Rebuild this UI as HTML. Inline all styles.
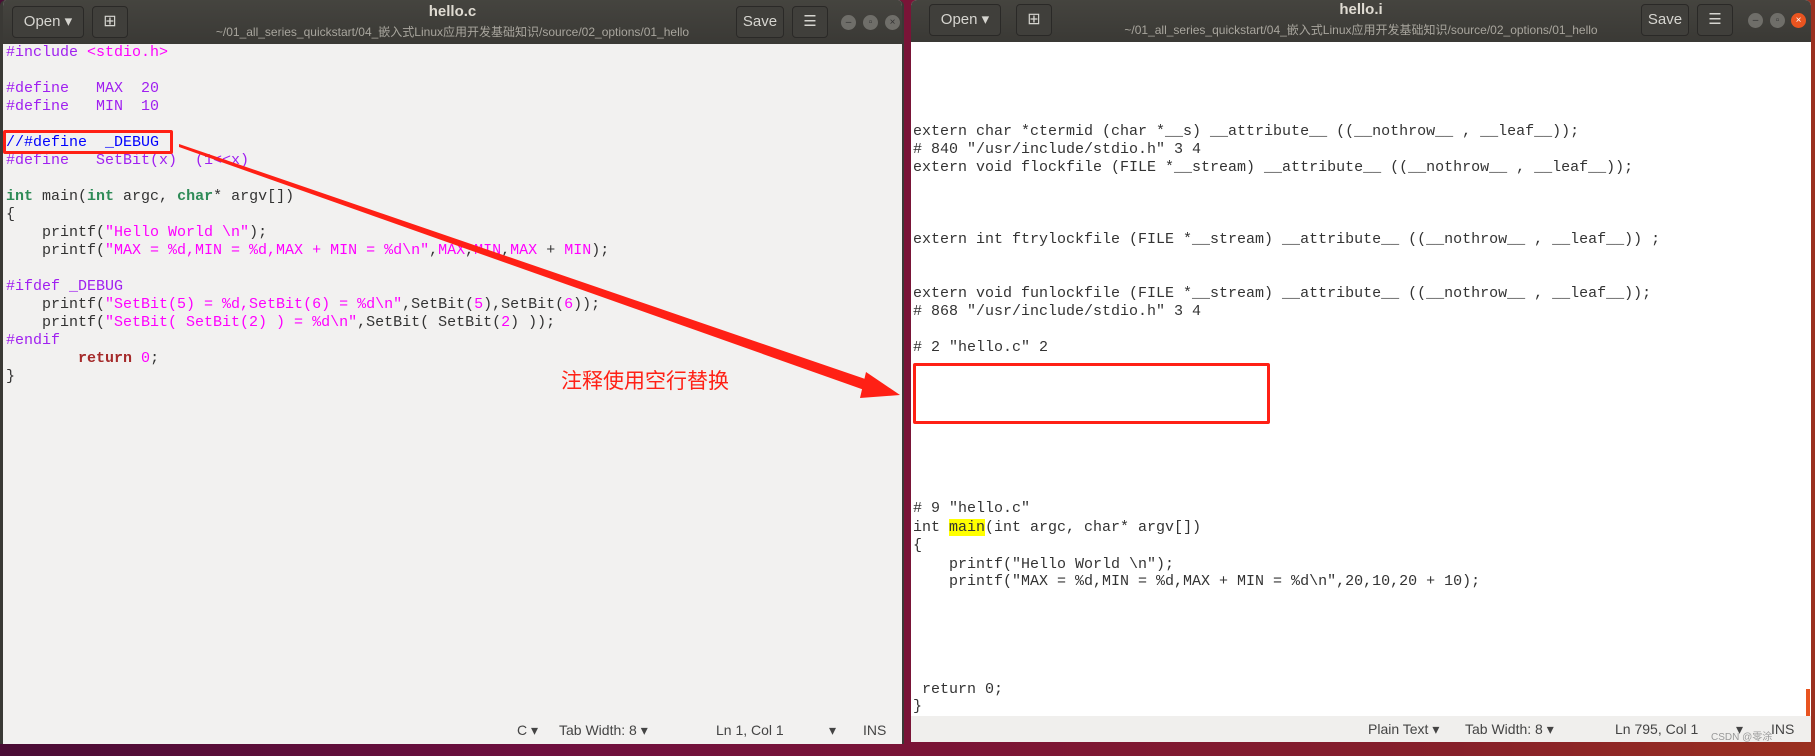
<!DOCTYPE html>
<html><head><meta charset="utf-8"><style>
*{margin:0;padding:0;box-sizing:border-box}
body{width:1815px;height:756px;overflow:hidden;position:relative;background:linear-gradient(90deg,#4a0c35 0%,#6e0f3e 30%,#7c1535 55%,#86202a 80%,#9a3020 100%);font-family:"Liberation Sans","Noto Sans CJK SC",sans-serif}
.win{position:absolute;top:0;overflow:hidden;border-radius:6px 6px 0 0}
.tb{position:absolute;left:0;right:0;top:0;height:44px;background:linear-gradient(#45443f,#3a3935);}
.btn{position:absolute;top:6px;height:32px;border:1px solid #2a2927;border-radius:4px;background:#403f3b;color:#d6d5d0;font-size:15px;line-height:30px;text-align:center}
.t1{position:absolute;top:3px;left:0;right:0;text-align:center;color:#dfdbd2;font-size:15px;font-weight:bold}
.t2{position:absolute;top:23px;left:0;right:0;text-align:center;color:#a8a59d;font-size:12px;font-family:"Liberation Sans","Noto Sans CJK SC",sans-serif}
.ctl{position:absolute;top:15px;width:15px;height:15px;border-radius:50%;background:#6f6e69;color:#333;font-size:10px;line-height:15px;text-align:center}
.code{position:absolute;left:0;right:0;top:44px;bottom:0;font-family:"Liberation Mono",monospace;font-size:15px;color:#333}
.l{position:absolute;white-space:pre;line-height:18px;height:18px}
.pp{color:#a020f0}.st{color:#ff00ff}.ty{color:#2e8b57;font-weight:bold}.kw{color:#a52a2a;font-weight:bold}.cm{color:#0000ff}
.sb{position:absolute;left:0;right:0;height:26px;background:#f0efed;font-size:14px;color:#444}
.sb span{position:absolute;top:5px;white-space:pre}
</style></head><body>

<div class="win" style="left:0;width:904px;height:744px;background:#f2f1f0;border-left:3px solid #3a3935;border-right:2px solid #3a3935">
 <div class="tb"></div>
 <div class="btn" style="left:9px;width:72px">Open ▾</div>
 <div class="btn" style="left:89px;width:36px;font-size:16px">⊞</div>
 <div class="t1">hello.c</div>
 <div class="t2">~/01_all_series_quickstart/04_嵌入式Linux应用开发基础知识/source/02_options/01_hello</div>
 <div class="btn" style="left:733px;width:48px">Save</div>
 <div class="btn" style="left:789px;width:36px">☰</div>
 <div class="ctl" style="left:838px">–</div><div class="ctl" style="left:860px">▫</div><div class="ctl" style="left:882px">×</div>
 <div class="code">
  <div class="l" style="top:0;left:3px"><span class="pp">#include </span><span class="st">&lt;stdio.h&gt;</span></div>
  <div class="l" style="top:36px;left:3px"><span class="pp">#define   MAX  20</span></div>
  <div class="l" style="top:54px;left:3px"><span class="pp">#define   MIN  10</span></div>
  <div class="l" style="top:90px;left:3px"><span class="cm">//#define  _DEBUG</span></div>
  <div class="l" style="top:108px;left:3px"><span class="pp">#define   SetBit(x)  (1&lt;&lt;x)</span></div>
  <div class="l" style="top:144px;left:3px"><span class="ty">int</span> main(<span class="ty">int</span> argc, <span class="ty">char</span>* argv[])</div>
  <div class="l" style="top:162px;left:3px">{</div>
  <div class="l" style="top:180px;left:3px">    printf(<span class="st">"Hello World \n"</span>);</div>
  <div class="l" style="top:198px;left:3px">    printf(<span class="st">"MAX = %d,MIN = %d,MAX + MIN = %d\n"</span>,<span class="st">MAX</span>,<span class="st">MIN</span>,<span class="st">MAX</span> + <span class="st">MIN</span>);</div>
  <div class="l" style="top:234px;left:3px"><span class="pp">#ifdef _DEBUG</span></div>
  <div class="l" style="top:252px;left:3px">    printf(<span class="st">"SetBit(5) = %d,SetBit(6) = %d\n"</span>,SetBit(<span class="st">5</span>),SetBit(<span class="st">6</span>));</div>
  <div class="l" style="top:270px;left:3px">    printf(<span class="st">"SetBit( SetBit(2) ) = %d\n"</span>,SetBit( SetBit(<span class="st">2</span>) ));</div>
  <div class="l" style="top:288px;left:3px"><span class="pp">#endif</span></div>
  <div class="l" style="top:306px;left:3px">        <span class="kw">return</span> <span class="st">0</span>;</div>
  <div class="l" style="top:324px;left:3px">}</div>
 </div>
 <div class="sb" style="top:717px;background:#f2f1f0">
  <span style="left:514px">C ▾</span><span style="left:556px">Tab Width: 8 ▾</span><span style="left:713px">Ln 1, Col 1</span><span style="left:826px">▾</span><span style="left:860px">INS</span>
 </div>
</div>

<div class="win" style="left:911px;width:900px;height:742px;background:#fff">
 <div class="tb" style="height:42px"></div>
 <div class="btn" style="left:18px;width:72px;top:4px">Open ▾</div>
 <div class="btn" style="left:105px;width:36px;top:4px;font-size:16px">⊞</div>
 <div class="t1" style="top:1px">hello.i</div>
 <div class="t2" style="top:21px">~/01_all_series_quickstart/04_嵌入式Linux应用开发基础知识/source/02_options/01_hello</div>
 <div class="btn" style="left:730px;width:48px;top:4px">Save</div>
 <div class="btn" style="left:786px;width:36px;top:4px">☰</div>
 <div class="ctl" style="left:837px;top:13px">–</div><div class="ctl" style="left:859px;top:13px">▫</div><div class="ctl" style="left:880px;top:13px;background:#e95420;color:#fff">×</div>
 <div class="code" style="top:0">
  <div class="l" style="top:123px;left:2px">extern char *ctermid (char *__s) __attribute__ ((__nothrow__ , __leaf__));</div>
  <div class="l" style="top:141px;left:2px"># 840 "/usr/include/stdio.h" 3 4</div>
  <div class="l" style="top:159px;left:2px">extern void flockfile (FILE *__stream) __attribute__ ((__nothrow__ , __leaf__));</div>
  <div class="l" style="top:231px;left:2px">extern int ftrylockfile (FILE *__stream) __attribute__ ((__nothrow__ , __leaf__)) ;</div>
  <div class="l" style="top:285px;left:2px">extern void funlockfile (FILE *__stream) __attribute__ ((__nothrow__ , __leaf__));</div>
  <div class="l" style="top:303px;left:2px"># 868 "/usr/include/stdio.h" 3 4</div>
  <div class="l" style="top:339px;left:2px"># 2 "hello.c" 2</div>
  <div class="l" style="top:500px;left:2px"># 9 "hello.c"</div>
  <div class="l" style="top:519px;left:2px">int <span style="background:#ffff00">main</span>(int argc, char* argv[])</div>
  <div class="l" style="top:537px;left:2px">{</div>
  <div class="l" style="top:556px;left:2px">    printf("Hello World \n");</div>
  <div class="l" style="top:573px;left:2px">    printf("MAX = %d,MIN = %d,MAX + MIN = %d\n",20,10,20 + 10);</div>
  <div class="l" style="top:681px;left:2px"> return 0;</div>
  <div class="l" style="top:698px;left:2px">}</div>
 </div>
 <div style="position:absolute;left:895px;top:689px;width:4px;height:28px;background:#e95420"></div>
 <div class="sb" style="top:716px">
  <span style="left:457px">Plain Text ▾</span><span style="left:554px">Tab Width: 8 ▾</span><span style="left:704px">Ln 795, Col 1</span><span style="left:825px">▾</span><span style="left:860px">INS</span>
  <span style="left:800px;top:12px;font-size:10px;color:#999">CSDN @零涂</span>
 </div>
</div>

<div style="position:absolute;left:3px;top:130px;width:170px;height:24px;border:3px solid #ff2015;border-radius:2px"></div>
<div style="position:absolute;left:913px;top:363px;width:357px;height:61px;border:3px solid #ff2015;border-radius:2px"></div>
<svg style="position:absolute;left:0;top:0" width="1815" height="756">
 <polygon points="179,144 179,147 870,392 874,382" fill="#ff2015"/>
 <polygon points="900,395 866,372 860,398" fill="#ff2015"/>
</svg>
<div style="position:absolute;left:561px;top:367px;font-size:21px;color:#ff2015;font-family:'Noto Sans CJK SC',sans-serif;line-height:26px">注释使用空行替换</div>
</body></html>
